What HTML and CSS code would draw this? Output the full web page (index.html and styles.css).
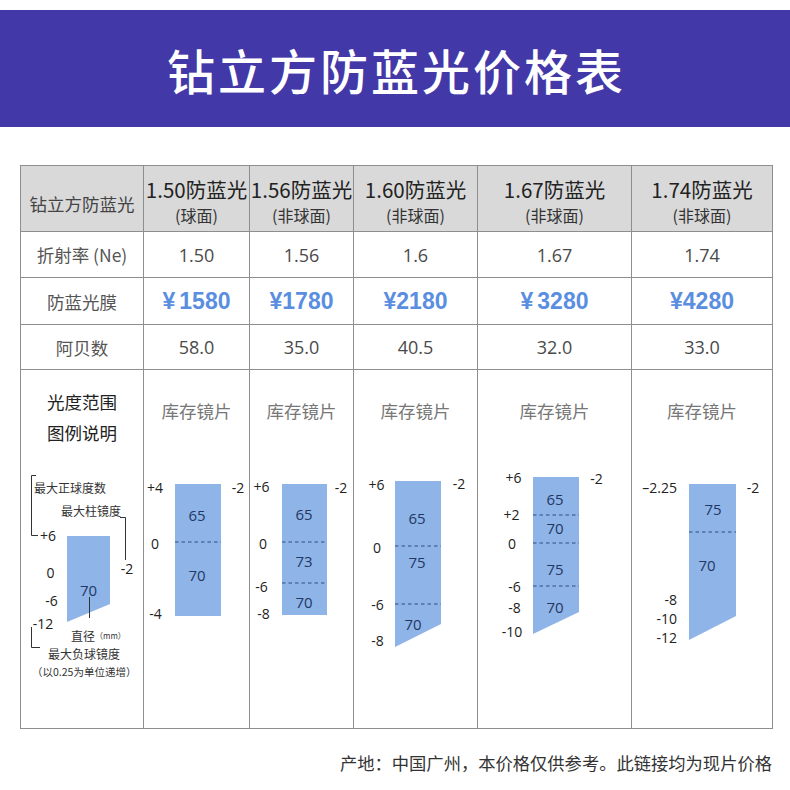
FILE: index.html
```
<!DOCTYPE html>
<html lang="zh-CN">
<head>
<meta charset="utf-8">
<title>钻立方防蓝光价格表</title>
<link rel="stylesheet" href="styles.css">
</head>
<body>
<header class="banner"><h1 class="title">钻立方防蓝光价格表</h1></header>

<div class="table">
  <div class="cell head first">钻立方防蓝光</div>
  <div class="cell head"><div class="t">1.50防蓝光</div><div class="s">(球面)</div></div>
  <div class="cell head"><div class="t">1.56防蓝光</div><div class="s">(非球面)</div></div>
  <div class="cell head"><div class="t">1.60防蓝光</div><div class="s">(非球面)</div></div>
  <div class="cell head"><div class="t">1.67防蓝光</div><div class="s">(非球面)</div></div>
  <div class="cell head"><div class="t">1.74防蓝光</div><div class="s">(非球面)</div></div>

  <div class="cell rowlbl">折射率 (Ne)</div>
  <div class="cell val">1.50</div>
  <div class="cell val">1.56</div>
  <div class="cell val">1.6</div>
  <div class="cell val">1.67</div>
  <div class="cell val">1.74</div>

  <div class="cell rowlbl">防蓝光膜</div>
  <div class="cell price"><span class="yen gap">¥</span>1580</div>
  <div class="cell price"><span class="yen">¥</span>1780</div>
  <div class="cell price"><span class="yen">¥</span>2180</div>
  <div class="cell price"><span class="yen gap">¥</span>3280</div>
  <div class="cell price"><span class="yen">¥</span>4280</div>

  <div class="cell rowlbl">阿贝数</div>
  <div class="cell val">58.0</div>
  <div class="cell val">35.0</div>
  <div class="cell val">40.5</div>
  <div class="cell val">32.0</div>
  <div class="cell val">33.0</div>

  <div class="cell range legend">
    <div class="lbl lbl-legend">光度范围<br>图例说明</div>
    <svg class="diag" width="122" height="280" viewBox="0 0 122 280">
      <path class="brk" d="M15 27.5H10.5V87.5H17"/>
      <text class="sm" x="13" y="39">最大正球度数</text>
      <text class="sm" x="40" y="62">最大柱镜度</text>
      <path class="brk" d="M99 69.5H104.5V112"/>
      <text class="ax" x="106" y="120">-2</text>
      <polygon class="lens" points="46,88 89,88 89,156 46,174"/>
      <text class="ax" x="27" y="87">+6</text>
      <text class="ax" x="29.5" y="124">0</text>
      <text class="num" x="67.5" y="142">70</text>
      <line class="brk" x1="68.5" y1="149" x2="68.5" y2="170"/>
      <text class="ax" x="30.5" y="152">-6</text>
      <text class="ax" x="22" y="175">-12</text>
      <text class="sm" x="50" y="187">直径<tspan class="xs">（mm）</tspan></text>
      <path class="brk" d="M10.5 179V199.5H19"/>
      <text class="sm" x="27" y="205">最大负球镜度</text>
      <text class="xs2" x="11" y="223">（以0.25为单位递增）</text>
    </svg>
  </div>

  <div class="cell range">
    <div class="lbl">库存镜片</div>
    <svg class="diag" width="105" height="280" viewBox="0 0 105 280">
      <rect class="lens" x="31" y="36" width="46" height="132"/>
      <line class="dash" x1="31" y1="94" x2="77" y2="94"/>
      <text class="num" x="53" y="67">65</text>
      <text class="num" x="53" y="127">70</text>
      <text class="ax" x="11" y="39">+4</text>
      <text class="ax" x="11" y="95">0</text>
      <text class="ax" x="11.5" y="165">-4</text>
      <text class="ax" x="94" y="39">-2</text>
    </svg>
  </div>

  <div class="cell range">
    <div class="lbl">库存镜片</div>
    <svg class="diag" width="103" height="280" viewBox="0 0 103 280">
      <rect class="lens" x="32" y="36" width="45" height="131"/>
      <line class="dash" x1="32" y1="94" x2="77" y2="94"/>
      <line class="dash" x1="32" y1="135" x2="77" y2="135"/>
      <text class="num" x="54" y="66">65</text>
      <text class="num" x="54" y="113">73</text>
      <text class="num" x="54" y="154">70</text>
      <text class="ax" x="11.5" y="38">+6</text>
      <text class="ax" x="13" y="95">0</text>
      <text class="ax" x="11.5" y="138">-6</text>
      <text class="ax" x="13.5" y="165">-8</text>
      <text class="ax" x="91" y="39">-2</text>
    </svg>
  </div>

  <div class="cell range">
    <div class="lbl">库存镜片</div>
    <svg class="diag" width="123" height="280" viewBox="0 0 123 280">
      <polygon class="lens" points="41,33 87,33 87,176 41,199"/>
      <line class="dash" x1="41" y1="98" x2="87" y2="98"/>
      <line class="dash" x1="41" y1="156" x2="87" y2="156"/>
      <text class="num" x="63" y="70">65</text>
      <text class="num" x="63" y="114">75</text>
      <text class="num" x="59" y="176">70</text>
      <text class="ax" x="22.5" y="36">+6</text>
      <text class="ax" x="23" y="99">0</text>
      <text class="ax" x="23.5" y="156">-6</text>
      <text class="ax" x="23.5" y="192">-8</text>
      <text class="ax" x="105" y="35">-2</text>
    </svg>
  </div>

  <div class="cell range">
    <div class="lbl">库存镜片</div>
    <svg class="diag" width="153" height="280" viewBox="0 0 153 280">
      <polygon class="lens" points="55,29 101,29 101,164 55,186"/>
      <line class="dash" x1="55" y1="67" x2="101" y2="67"/>
      <line class="dash" x1="55" y1="95" x2="101" y2="95"/>
      <line class="dash" x1="55" y1="138" x2="101" y2="138"/>
      <text class="num" x="77" y="51">65</text>
      <text class="num" x="77" y="80">70</text>
      <text class="num" x="77" y="121">75</text>
      <text class="num" x="77" y="159">70</text>
      <text class="ax" x="35.5" y="29">+6</text>
      <text class="ax" x="33.5" y="66">+2</text>
      <text class="ax" x="34" y="95">0</text>
      <text class="ax" x="36.5" y="138">-6</text>
      <text class="ax" x="36.5" y="159">-8</text>
      <text class="ax" x="34" y="183">-10</text>
      <text class="ax" x="118.5" y="30">-2</text>
    </svg>
  </div>

  <div class="cell range">
    <div class="lbl">库存镜片</div>
    <svg class="diag" width="140" height="280" viewBox="0 0 140 280">
      <polygon class="lens" points="57,36 104,36 104,168 57,192"/>
      <line class="dash" x1="57" y1="84" x2="104" y2="84"/>
      <text class="num" x="81" y="61">75</text>
      <text class="num" x="75" y="117">70</text>
      <text class="ax end" x="45" y="39">–2.25</text>
      <text class="ax end" x="45" y="151">-8</text>
      <text class="ax end" x="45" y="170">-10</text>
      <text class="ax end" x="45" y="189">-12</text>
      <text class="ax" x="121" y="39">-2</text>
    </svg>
  </div>
</div>

<p class="note">产地：中国广州，本价格仅供参考。此链接均为现片价格</p>
</body>
</html>
```

FILE: styles.css
```
html, body {
  margin: 0;
  padding: 0;
  background: #ffffff;
}

body {
  width: 790px;
  font-family: "Noto Sans CJK SC", "Noto Sans", sans-serif;
  color: #333;
}

.banner {
  margin-top: 10px;
  height: 117px;
  background: #4338a8;
  display: flex;
  align-items: center;
  justify-content: center;
}

.title {
  margin: 0;
  padding-left: 3px;
  font-size: 48px;
  font-weight: 500;
  letter-spacing: 3px;
  color: #ffffff;
  line-height: 1;
}

.table {
  display: grid;
  grid-template-columns: 122px 105px 103px 123px 153px 140px;
  grid-template-rows: 65px 45px 46px 44px 358px;
  gap: 1px;
  background: #8e8e8e;
  border: 1px solid #8e8e8e;
  width: max-content;
  margin: 38px 0 0 20px;
}

.cell {
  background: #ffffff;
  display: flex;
  flex-direction: column;
  align-items: center;
  justify-content: center;
  text-align: center;
  white-space: nowrap;
}

.head {
  background: #d9d9d9;
  padding-top: 4px;
  box-sizing: border-box;
  color: #222;
}

.head .t {
  font-size: 20.5px;
  line-height: 30px;
}

.head .s {
  font-size: 16px;
  line-height: 23px;
  color: #333;
}

.head.first {
  font-size: 17.5px;
  color: #444;
  padding-top: 10px;
}

.rowlbl {
  font-size: 17.5px;
  color: #555;
}

.val {
  font-family: "Open Sans", "Noto Sans CJK SC", sans-serif;
  font-size: 18px;
  color: #4a4a4a;
}

.price {
  flex-direction: row;
  font-family: "Liberation Sans", Arial, sans-serif;
  font-weight: bold;
  font-size: 23px;
  color: #5a8ee0;
}

.yen.gap {
  margin-right: 4px;
}

.range {
  justify-content: flex-start;
}

.lbl {
  box-sizing: border-box;
  height: 78px;
  padding-top: 28px;
  font-size: 17.5px;
  line-height: 26px;
  color: #777;
}

.lbl-legend {
  padding-top: 16px;
  line-height: 31px;
  color: #222;
}

.diag {
  display: block;
}

.diag text {
  dominant-baseline: central;
}

.lens {
  fill: #8fb4e8;
}

.dash {
  stroke: #2d4d86;
  stroke-width: 1.2;
  stroke-dasharray: 3.5 3;
}

.brk {
  fill: none;
  stroke: #333;
  stroke-width: 1;
}

.ax {
  font-family: "Open Sans", "Noto Sans", sans-serif;
  font-size: 14px;
  fill: #222;
  text-anchor: middle;
}

.ax.end {
  text-anchor: end;
}

.num {
  font-family: "Open Sans", "Noto Sans", sans-serif;
  font-size: 15px;
  fill: #1f3864;
  text-anchor: middle;
}

.sm {
  font-family: "Noto Sans CJK SC", sans-serif;
  font-size: 12px;
  fill: #333;
}

.xs {
  font-size: 8px;
}

.xs2 {
  font-family: "Noto Sans CJK SC", sans-serif;
  font-size: 10.5px;
  fill: #333;
}

.note {
  margin: 22px 18px 0 0;
  text-align: right;
  font-size: 17.3px;
  line-height: 24px;
  color: #333;
}
```
